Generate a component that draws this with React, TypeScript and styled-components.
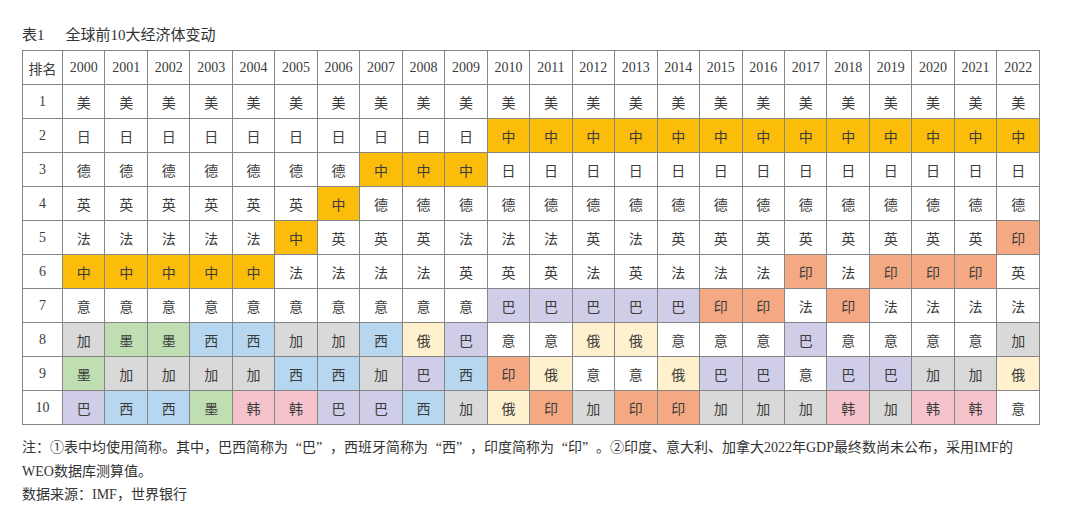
import React from 'react';
import styled, { createGlobalStyle } from 'styled-components';

const GlobalStyle = createGlobalStyle`
  html, body {
    margin: 0;
    padding: 0;
    background: #ffffff;
  }
  body {
    font-family: 'Liberation Serif', 'Noto Sans CJK SC', serif;
    color: #3a3a3a;
  }
`;

type Country = '美' | '日' | '德' | '英' | '法' | '意' | '中' | '印' | '巴' | '西' | '墨' | '加' | '韩' | '俄';

const fills: Partial<Record<Country, string>> = {
  中: '#fbbc0a',
  印: '#f4a983',
  巴: '#cfcde8',
  西: '#b6d7ef',
  墨: '#bfdfb3',
  加: '#d9d9d9',
  韩: '#f4c3cb',
  俄: '#fff1cd',
};

const years = Array.from({ length: 23 }, (_, i) => 2000 + i);

// each row: one char per year, 2000 → 2022
const ranking: string[] = [
  '美美美美美美美美美美美美美美美美美美美美美美美',
  '日日日日日日日日日日中中中中中中中中中中中中中',
  '德德德德德德德中中中日日日日日日日日日日日日日',
  '英英英英英英中德德德德德德德德德德德德德德德德',
  '法法法法法中英英英法法法英法英英英英英英英英印',
  '中中中中中法法法法英英英法英法法法印法印印印英',
  '意意意意意意意意意意巴巴巴巴巴印印法印法法法法',
  '加墨墨西西加加西俄巴意意俄俄意意意巴意意意意加',
  '墨加加加加西西加巴西印俄意意俄巴巴意巴巴加加俄',
  '巴西西墨韩韩巴巴西加俄印加印印加加加韩加韩韩意',
];

const Page = styled.main`
  padding: 25px 0 0 22px;
`;

const Caption = styled.div`
  display: flex;
  gap: 21px;
  height: 20px;
  margin-bottom: 5px;
  font-size: 15px;
  line-height: 20px;
  color: #333333;
`;

const Table = styled.table`
  width: 1018px;
  border-collapse: collapse;
  table-layout: fixed;
`;

const RankCol = styled.col`
  width: 40px;
`;

const Cell = styled.td<{ $fill?: string }>`
  height: 33px;
  padding: 0;
  border: 1px solid #858585;
  background: ${({ $fill }) => $fill ?? '#ffffff'};
  text-align: center;
  vertical-align: middle;
  font-size: 14px;
  color: #3c3c3c;
`;

const HeadCell = styled(Cell).attrs({ as: 'th' })`
  font-weight: normal;
`;

const Notes = styled.div`
  margin-top: 11px;
  font-size: 14px;
  line-height: 23.5px;
  color: #333333;
`;

const NoteLine = styled.div`
  white-space: nowrap;
`;

// full-width curly quote, as in the source document
const Quote = styled.span<{ $open?: boolean }>`
  display: inline-block;
  width: 14px;
  text-align: ${({ $open }) => ($open ? 'right' : 'left')};
`;

const Quoted = ({ children }: { children: React.ReactNode }) => (
  <>
    <Quote $open>“</Quote>
    {children}
    <Quote>”</Quote>
  </>
);

export default function App() {
  return (
    <Page>
      <GlobalStyle />
      <Caption>
        <span>表1</span>
        <span>全球前10大经济体变动</span>
      </Caption>
      <Table>
        <colgroup>
          <RankCol />
          {years.map((y) => (
            <col key={y} />
          ))}
        </colgroup>
        <thead>
          <tr>
            <HeadCell>排名</HeadCell>
            {years.map((y) => (
              <HeadCell key={y}>{y}</HeadCell>
            ))}
          </tr>
        </thead>
        <tbody>
          {ranking.map((row, idx) => (
            <tr key={idx}>
              <Cell>{idx + 1}</Cell>
              {Array.from(row).map((c, i) => (
                <Cell key={i} $fill={fills[c as Country]}>
                  {c}
                </Cell>
              ))}
            </tr>
          ))}
        </tbody>
      </Table>
      <Notes>
        <NoteLine>
          注：①表中均使用简称。其中，巴西简称为<Quoted>巴</Quoted>，西班牙简称为<Quoted>西</Quoted>，印度简称为
          <Quoted>印</Quoted>。②印度、意大利、加拿大2022年GDP最终数尚未公布，采用IMF的
        </NoteLine>
        <NoteLine>WEO数据库测算值。</NoteLine>
        <NoteLine>数据来源：IMF，世界银行</NoteLine>
      </Notes>
    </Page>
  );
}
